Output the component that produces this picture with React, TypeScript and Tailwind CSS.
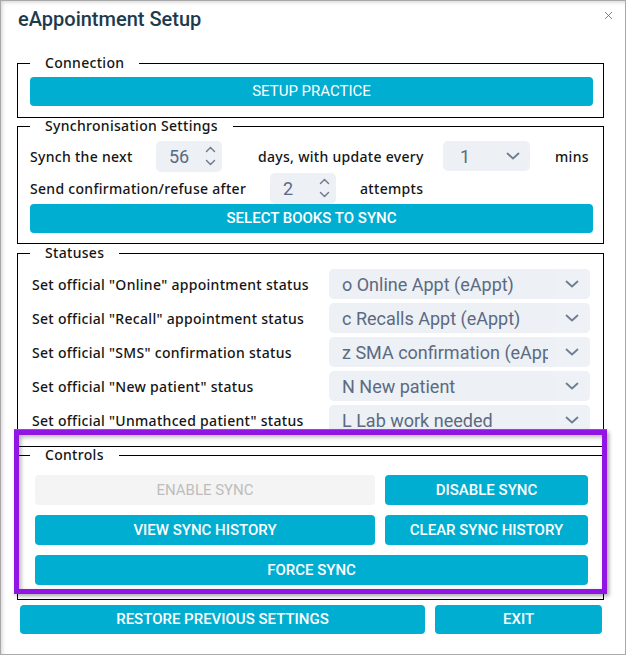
import React from 'react';
import { X } from 'lucide-react';

const label = "font-['Noto_Sans',sans-serif] text-[14px] tracking-[0.3px] font-medium text-[#151515]";
const btnBase =
  "flex items-center justify-center rounded-[4px] bg-[#00aed1] text-white font-['Roboto',sans-serif] text-[15px] uppercase h-[29px]";
const btn = `${btnBase} font-medium`;

const Chevron: React.FC<{ className?: string }> = ({ className }) => (
  <svg width="14" height="8" viewBox="0 0 14 8" className={className}>
    <path d="M1.5 1.5 L7 6.5 L12.5 1.5" fill="none" stroke="#6f7d92" strokeWidth="1.8" strokeLinecap="round" strokeLinejoin="round" />
  </svg>
);

const Spin = () => (
  <div className="flex flex-col items-center gap-[6px]">
    <svg width="11" height="7" viewBox="0 0 11 7">
      <path d="M1.5 5.5 L5.5 1.5 L9.5 5.5" fill="none" stroke="#707d90" strokeWidth="1.5" strokeLinecap="round" />
    </svg>
    <svg width="11" height="7" viewBox="0 0 11 7">
      <path d="M1.5 1.5 L5.5 5.5 L9.5 1.5" fill="none" stroke="#707d90" strokeWidth="1.5" strokeLinecap="round" />
    </svg>
  </div>
);

const NumberBox: React.FC<{ value: string }> = ({ value }) => (
  <div className="w-[66px] h-[31px] rounded-[5px] bg-[#edf0f4] flex items-center pl-[13px] pr-[6px] justify-between">
    <span className="font-['Roboto',sans-serif] text-[18px] text-[#5b6a82]">{value}</span>
    <Spin />
  </div>
);

const Legend: React.FC<{ children: React.ReactNode; className?: string }> = ({ children, className }) => (
  <legend className={`px-[15px] leading-[16px] ${label} ${className ?? ''}`}>{children}</legend>
);

const statuses = [
  { text: 'Set official "Online" appointment status', value: 'o Online Appt (eAppt)' },
  { text: 'Set official "Recall" appointment status', value: 'c Recalls Appt (eAppt)' },
  { text: 'Set official "SMS" confirmation status', value: 'z SMA confirmation (eAppt)' },
  { text: 'Set official "New patient" status', value: 'N New patient' },
  { text: 'Set official "Unmathced patient" status', value: 'L Lab work needed' },
];

const App: React.FC = () => {
  return (
    <div className="w-[626px] h-[655px] bg-white border border-[#a9a9a9] relative shadow-[inset_3px_3px_4px_-2px_rgba(0,0,0,0.18)]">
      {/* Title */}
      <div className="flex items-start justify-between pl-[17px] pr-[10px] pt-[6px]">
        <h1 className="font-['Roboto',sans-serif] text-[20px] leading-[24px] font-medium text-[#1d3b4e]">
          eAppointment Setup
        </h1>
        <X className="w-[13px] h-[13px] mt-[2px] text-[#666]" strokeWidth={1.5} />
      </div>

      {/* Connection */}
      <fieldset className="ml-[16px] w-[587px] mt-[24px] border border-black pl-[12px] pr-[10px] pt-[6px] pb-[11px]">
        <Legend>Connection</Legend>
        <div className={`${btnBase} font-normal`}>Setup Practice</div>
      </fieldset>

      {/* Synchronisation */}
      <fieldset className="ml-[16px] w-[587px] border border-black pl-[12px] pr-[10px] pt-[6px] pb-[10px]">
        <Legend>Synchronisation Settings</Legend>
        <div className="flex items-center h-[32px]">
          <span className={`${label} w-[126px]`}>Synch the next</span>
          <NumberBox value="56" />
          <span className={`${label} ml-[36px] w-[185px]`}>days, with update every</span>
          <div className="w-[87px] h-[30px] rounded-[5px] bg-[#edf0f4] flex items-center justify-between pl-[17px] pr-[10px]">
            <span className="font-['Roboto',sans-serif] text-[18px] text-[#5b6a82]">1</span>
            <Chevron />
          </div>
          <span className={`${label} ml-[25px]`}>mins</span>
        </div>
        <div className="flex items-center h-[32px]">
          <span className={`${label} w-[240px]`}>Send confirmation/refuse after</span>
          <NumberBox value="2" />
          <span className={`${label} ml-[24px]`}>attempts</span>
        </div>
        <div className={btn}>Select books to sync</div>
      </fieldset>

      {/* Statuses */}
      <fieldset className="ml-[16px] mt-[1px] w-[587px] border border-black pl-[14px] pr-[13px] pt-[8px] pb-[11px]">
        <Legend className="ml-[-2px]">Statuses</Legend>
        <div className="flex flex-col gap-[4px]">
          {statuses.map((s) => (
            <div key={s.text} className="flex items-center justify-between h-[30px]">
              <span className={label}>{s.text}</span>
              <div className="w-[261px] h-[30px] rounded-[5px] bg-[#edf0f4] flex items-center">
                <div className="flex-1 pl-[13px] overflow-hidden whitespace-nowrap font-['Roboto',sans-serif] text-[18px] text-[#5b6a82] mr-[6px]">
                  {s.value}
                </div>
                <div className="w-[36px] h-full flex items-center justify-center rounded-r-[5px] bg-[#eef1f5]">
                  <Chevron />
                </div>
              </div>
            </div>
          ))}
        </div>
      </fieldset>

      {/* Controls */}
      <fieldset className="ml-[16px] w-[587px] border border-black pl-[17px] pr-[15px] pt-[12px] pb-[14px]">
        <Legend className="ml-[-5px]">Controls</Legend>
        <div className="grid grid-cols-[340px_1fr] gap-x-[10px] gap-y-[10px]">
          <div className="flex items-center justify-center rounded-[4px] bg-[#f4f4f4] text-[#bdbdbd] font-['Roboto',sans-serif] text-[15px] uppercase h-[30px]">
            Enable sync
          </div>
          <div className={`${btn} h-[30px]`}>Disable sync</div>
          <div className={`${btn} h-[30px]`}>View sync history</div>
          <div className={`${btn} h-[30px]`}>Clear sync history</div>
          <div className={`${btn} h-[30px] col-span-2`}>Force sync</div>
        </div>
      </fieldset>

      {/* Footer buttons */}
      <div className="flex gap-[10px] pl-[19px] pr-[23px] mt-[5px]">
        <div className={`${btn} w-[405px]`}>Restore previous settings</div>
        <div className={`${btn} flex-1`}>Exit</div>
      </div>

      {/* Highlight annotation */}
      <div className="absolute left-[13px] top-[428px] w-[593px] h-[165px] border-t border-[#22a84a] pointer-events-none">
        <div className="w-full h-full border-[5px] border-[#9116e4] shadow-[2px_2px_4px_rgba(0,0,0,0.35),inset_2px_2px_4px_rgba(0,0,0,0.3)]" />
      </div>
    </div>
  );
};

export default App;
